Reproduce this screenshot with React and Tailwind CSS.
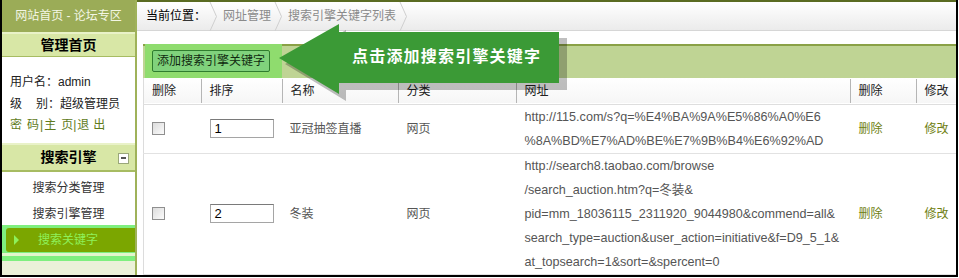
import React from 'react';

const FONT = "font-['Liberation_Sans','Noto_Sans_CJK_SC',sans-serif]";

const Chevron = () => (
  <svg width="9" height="29" viewBox="0 0 9 29" className="shrink-0">
    <polyline points="1,0 7.5,14.5 1,29" fill="none" stroke="#cfcfcf" strokeWidth="1" />
  </svg>
);

const CheckBox = () => (
  <div className="w-[13px] h-[13px] border border-[#8f8f8f] bg-gradient-to-br from-[#dcdcdc] to-[#fbfbfb]" />
);

const OrderInput = ({ value }) => (
  <div className="w-[64px] h-[19px] border border-[#a5a5a5] border-t-[#7a7a7a] bg-white pl-[4px] text-[13px] leading-[17px] text-black">
    {value}
  </div>
);

const rows = [
  {
    order: '1',
    name: '亚冠抽签直播',
    url: ['http://115.com/s?q=%E4%BA%9A%E5%86%A0%E6', '%8A%BD%E7%AD%BE%E7%9B%B4%E6%92%AD'],
    h: 'h-[48px]',
  },
  {
    order: '2',
    name: '冬装',
    url: [
      'http://search8.taobao.com/browse',
      '/search_auction.htm?q=冬装&',
      'pid=mm_18036115_2311920_9044980&commend=all&',
      'search_type=auction&user_action=initiative&f=D9_5_1&',
      'at_topsearch=1&sort=&spercent=0',
    ],
    h: 'h-[121px]',
  },
];

const Sidebar = () => (
  <div className="w-[135px] shrink-0 flex flex-col border-r-2 border-[#9fb25a] bg-[#ebf1d9]">
    <div className="h-[32px] bg-[#9bac57] flex items-center justify-center text-[12px] text-[#f3f6e4]">
      网站首页 - 论坛专区
    </div>
    <div className="h-[25px] bg-[#d8e7a6] border-t-2 border-[#e9f2c8] border-b border-b-[#a7bc62] flex items-center justify-center text-[14px] font-bold text-black">
      管理首页
    </div>
    <div className="bg-white pl-[8px] pt-[15px] pb-[6px] text-[12px] leading-[21.5px] text-[#222]">
      <div>用户名：admin</div>
      <div className="flex"><span>级</span><span className="ml-[14px]">别：超级管理员</span></div>
      <div className="flex items-center text-[#5f7b1c]">
        <span>密</span>
        <span className="ml-[5px]">码</span>
        <span className="ml-[1px]">|</span>
        <span className="ml-[1px]">主</span>
        <span className="ml-[5px]">页</span>
        <span>|</span>
        <span className="ml-[1px]">退</span>
        <span className="ml-[4px]">出</span>
      </div>
    </div>
    <div className="h-[29px] bg-[#d8e7a6] border-t-2 border-[#e9f2c8] border-b-2 border-b-[#a7bc62] relative flex items-center justify-center text-[14px] font-bold text-black">
      搜索引擎
      <div className="absolute right-[6px] top-[8px] w-[11px] h-[11px] bg-white border border-[#9aa77a] flex items-center justify-center">
        <div className="w-[5px] h-[2px] bg-[#555]" />
      </div>
    </div>
    <div className="bg-white">
      <div className="h-[32px] flex items-center justify-center text-[12px] text-[#333]">搜索分类管理</div>
      <div className="h-[21px] flex items-center justify-center text-[12px] text-[#333]">搜索引擎管理</div>
      <div className="bg-[#7fef7f] pt-[3px] pb-[1px]">
        <div className="ml-[4px] h-[24px] bg-[#7ba600] rounded-l-[3px] flex items-center pl-[8px] text-[12px] text-[#8ef05a]">
          <span className="w-0 h-0 border-y-[5px] border-y-transparent border-l-[5px] border-l-[#8ef05a]" />
          <span className="ml-[19px]">搜索关键字</span>
        </div>
      </div>
      <div className="h-[3px] bg-[#e3f5cc]" />
      <div className="h-[5px] bg-[#7fef7f]" />
    </div>
    <div className="flex-1" />
  </div>
);

const Arrow = () => (
  <div className="absolute left-[270px] top-[18px] w-[300px] h-[84px] pointer-events-none">
    <svg width="300" height="84" viewBox="0 0 300 84" className="absolute left-0 top-0">
      <polygon points="10,43 71,9 71,17 292,17 292,69 71,69 71,80" fill="#000" opacity="0.25" transform="translate(3,3)" />
      <polygon points="7,40 67,6 67,14 287,14 287,65 67,65 67,76" fill="#3b9a36" />
    </svg>
    <div className="absolute left-[80px] top-[28px] text-[16px] leading-[22px] font-bold tracking-[1.2px] text-white">
      点击添加搜索引擎关键字
    </div>
  </div>
);

export default function App() {
  return (
    <div className={`w-[959px] h-[278px] bg-white overflow-hidden ${FONT}`}>
      <div className="w-[958px] h-[277px] border-x-2 border-b-2 border-black flex relative overflow-hidden">
        <Sidebar />
        <div className="flex-1 flex flex-col border-t-2 border-[#5a6b22] min-w-0">
          {/* breadcrumb */}
          <div className="h-[29px] shrink-0 bg-gradient-to-b from-white to-[#ebebeb] border-b border-[#d6d6d6] flex items-center pl-[9px] text-[12px]">
            <span className="text-black">当前位置：</span>
            <span className="ml-[3px]"><Chevron /></span>
            <span className="ml-[5px] text-[#8a8a8a]">网址管理</span>
            <span className="ml-[3px]"><Chevron /></span>
            <span className="ml-[5px] text-[#8a8a8a]">搜索引擎关键字列表</span>
            <span className="ml-[3px]"><Chevron /></span>
          </div>
          <div className="h-[13px] shrink-0" />
          <div className="pl-[6px] flex flex-col flex-1 min-h-0">
            {/* toolbar */}
            <div className="h-[34px] shrink-0 bg-[#bfd494] border-t-2 border-[#8aa146] flex items-center">
              <div className="h-[34px] -mt-[2px] ml-[2px] w-[137px] bg-[#8fdc6e] flex items-center pl-[7px]">
                <div className="h-[22px] px-[4px] bg-[#80d27c] border border-[#2f7d2f] rounded-[2px] flex items-center text-[12px] text-[#102a10]">
                  添加搜索引擎关键字
                </div>
              </div>
            </div>
            {/* table */}
            <table className="table-fixed border-collapse w-[814px] text-[12px] border-l border-[#dcdcdc]">
              <colgroup>
                <col className="w-[58px]" />
                <col className="w-[81px]" />
                <col className="w-[116px]" />
                <col className="w-[118px]" />
                <col className="w-[334px]" />
                <col className="w-[66px]" />
                <col className="w-[41px]" />
              </colgroup>
              <thead>
                <tr className="h-[26px] bg-gradient-to-b from-white to-[#f6f6f6] border-b border-[#dedede] text-[#222]">
                  {['删除', '排序', '名称', '分类', '网址', '删除', '修改'].map((t, i) => (
                    <th key={i} className="font-normal text-left align-middle p-0">
                      <div className={`h-[24px] flex items-center pl-[8px] ${i < 6 ? 'border-r border-[#b5b5b5]' : ''}`}>{t}</div>
                    </th>
                  ))}
                </tr>
              </thead>
              <tbody>
                {rows.map((r) => (
                  <tr key={r.order} className={`${r.h} border-b border-[#e2e2e2] text-[#555]`}>
                    <td className="pl-[8px] align-middle"><CheckBox /></td>
                    <td className="pl-[8px] align-middle"><OrderInput value={r.order} /></td>
                    <td className="pl-[7px] align-middle">{r.name}</td>
                    <td className="pl-[8px] align-middle">网页</td>
                    <td className="pl-[8px] align-middle text-[12.6px] leading-[24px] whitespace-nowrap">
                      {r.url.map((u, i) => <div key={i}>{u}</div>)}
                    </td>
                    <td className="pl-[8px] align-middle text-[#6f7f12]">删除</td>
                    <td className="pl-[8px] align-middle text-[#6f7f12]">修改</td>
                  </tr>
                ))}
              </tbody>
            </table>
          </div>
        </div>
        <Arrow />
      </div>
    </div>
  );
}
